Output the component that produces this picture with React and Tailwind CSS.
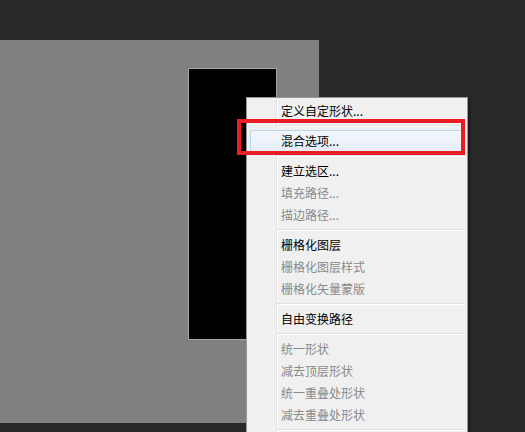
import React from 'react'

const items = [
  { label: '定义自定形状...', on: true },
  'sep',
  { label: '混合选项...', on: true, hot: true },
  'sep',
  { label: '建立选区...', on: true },
  { label: '填充路径...' },
  { label: '描边路径...' },
  'sep',
  { label: '栅格化图层', on: true },
  { label: '栅格化图层样式' },
  { label: '栅格化矢量蒙版' },
  'sep',
  { label: '自由变换路径', on: true },
  'sep',
  { label: '统一形状' },
  { label: '减去顶层形状' },
  { label: '统一重叠处形状' },
  { label: '减去重叠处形状' },
  'sep',
]

function MenuRow({ item }) {
  if (item === 'sep') {
    return (
      <div className="h-[8px] flex flex-col justify-center pl-[30px] pr-[2px]">
        <div className="h-px bg-[#e0e0e0]" />
        <div className="h-px bg-white" />
      </div>
    )
  }
  const text = item.on ? 'text-black' : 'text-[#8a8a8a]'
  if (item.hot) {
    return (
      <div className="h-[22px] px-[3px]">
        <div className="h-full rounded-[3px] border border-[#b4d4f0] bg-gradient-to-b from-[#f4f7fc] to-[#e6edf7] flex items-center pl-[30px]">
          <span className={`text-[12px] leading-none ${text}`}>{item.label}</span>
        </div>
      </div>
    )
  }
  return (
    <div className="h-[22px] flex items-center pl-[34px]">
      <span className={`text-[12px] leading-none ${text}`}>{item.label}</span>
    </div>
  )
}

export default function App() {
  return (
    <div
      className="relative w-[525px] h-[432px] overflow-hidden bg-[#282828] pt-[40px]"
      style={{ fontFamily: '"Noto Sans CJK SC", "Microsoft YaHei", sans-serif' }}
    >
      {/* document canvas */}
      <div className="w-[319px] h-[383px] bg-[#808080] pl-[188px] pt-[28px]">
        <div className="w-[89px] h-[272px] bg-black border border-[#a5a5a5]" />
      </div>

      {/* context menu */}
      <div className="absolute left-[246px] top-[97px] w-[222px] h-[340px] bg-[#f0f0f0] border border-[#979797] shadow-[2px_2px_2px_rgba(0,0,0,0.35)] pt-[2px]">
        <div className="absolute left-[29px] top-0 bottom-0 w-px bg-[#e2e3e3]" />
        <div className="absolute left-[30px] top-0 bottom-0 w-px bg-white" />
        <div className="relative flex flex-col">
          {items.map((it, i) => (
            <MenuRow key={i} item={it} />
          ))}
        </div>
      </div>

      {/* annotation */}
      <div className="absolute left-[237px] top-[119px] w-[228px] h-[36px] border-[4px] border-[#ec1c24]" />
    </div>
  )
}
